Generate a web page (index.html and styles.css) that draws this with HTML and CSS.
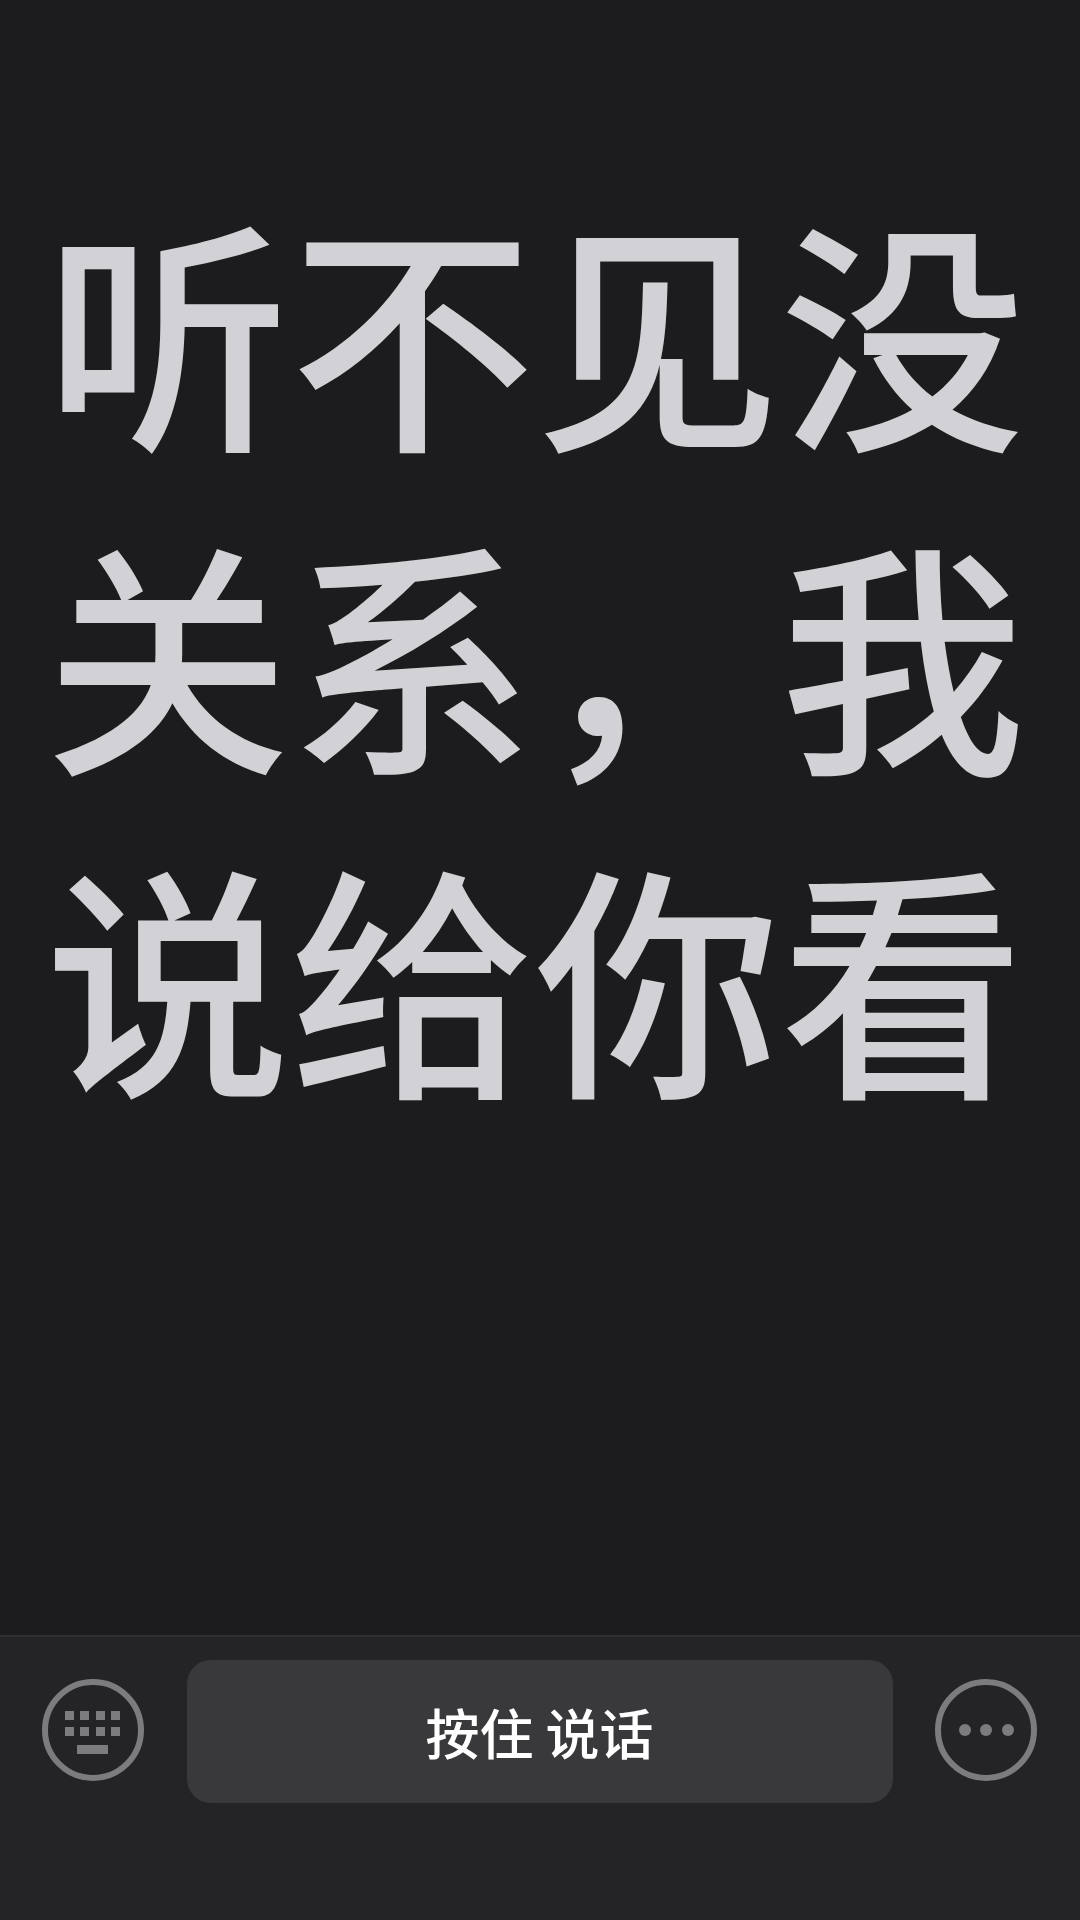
FILE: index.html
```html
<!DOCTYPE html>
<html lang="zh-CN">
<head>
<meta charset="utf-8">
<title>听不见没关系</title>
<link rel="stylesheet" href="styles.css">
</head>
<body>
<main class="screen">
  <h1 class="caption">听不见没<br>关系，我<br>说给你看</h1>
</main>
<footer class="bar">
  <button class="round" aria-label="键盘">
    <svg class="icon" viewBox="0 0 110 110">
      <circle cx="55" cy="55" r="48" class="ring"/>
      <g class="fill">
        <rect x="27" y="36" width="9" height="9"/><rect x="42" y="36" width="9" height="9"/><rect x="58" y="36" width="9" height="9"/><rect x="73" y="36" width="9" height="9"/>
        <rect x="27" y="52" width="9" height="9"/><rect x="42" y="52" width="9" height="9"/><rect x="58" y="52" width="9" height="9"/><rect x="73" y="52" width="9" height="9"/>
        <rect x="39" y="70" width="31" height="9"/>
      </g>
    </svg>
  </button>
  <button class="talk">按住 说话</button>
  <button class="round" aria-label="更多">
    <svg class="icon" viewBox="0 0 110 110">
      <circle cx="55" cy="55" r="48" class="ring"/>
      <g class="fill">
        <circle cx="34" cy="55" r="6"/><circle cx="55" cy="55" r="6"/><circle cx="77" cy="55" r="6"/>
      </g>
    </svg>
  </button>
</footer>
</body>
</html>
```
FILE: styles.css
```css
* { box-sizing: border-box; }
html, body { margin: 0; height: 100%; }
body {
  width: 1080px;
  height: 1920px;
  display: flex;
  flex-direction: column;
  background: #1c1c1e;
  font-family: "Noto Sans CJK SC", "Noto Sans", sans-serif;
  overflow: hidden;
}
.screen {
  flex: 1;
  padding: 165px 45px 0 45px;
}
.caption {
  margin: 0;
  font-size: 245px;
  line-height: 323px;
  font-weight: 500;
  color: #d1d1d6;
  white-space: nowrap;
}
.bar {
  height: 285px;
  flex: none;
  display: flex;
  align-items: flex-start;
  justify-content: space-between;
  padding: 23px 39px 0 38px;
  background: #242426;
  border-top: 2px solid #2e2e30;
}
.round {
  width: 110px;
  height: 110px;
  margin-top: 15px;
  padding: 0;
  border: 0;
  background: none;
}
.icon { display: block; width: 110px; height: 110px; }
.ring { fill: none; stroke: #7c7c7e; stroke-width: 6; }
.fill { fill: #7c7c7e; }
.talk {
  width: 706px;
  height: 143px;
  padding: 0;
  border: 0;
  border-radius: 24px;
  background: #39393b;
  color: #fff;
  font-family: inherit;
  font-size: 54px;
  font-weight: 500;
}
```
